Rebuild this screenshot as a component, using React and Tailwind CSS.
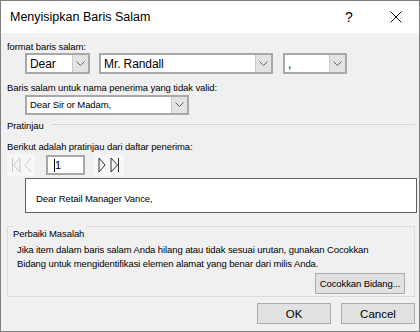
import React from "react";

const Chevron = () => (
  <svg width="9" height="6" viewBox="0 0 9 6" fill="none">
    <path d="M0.5 0.5 L4.5 4.5 L8.5 0.5" stroke="#606060" strokeWidth="1" />
  </svg>
);

const Combo = ({ w, text, textClass = "text-[12px]" }) => (
  <div
    className="flex h-full border-2 border-[#a8a8a8] bg-white"
    style={{ width: w }}
  >
    <div className={`flex-1 flex items-center pl-[3px] text-black whitespace-nowrap ${textClass}`}>{text}</div>
    <div className="w-[16px] bg-[#e3e3e3] border-l border-[#c8c8c8] flex items-center justify-center">
      <Chevron />
    </div>
  </div>
);

export default function App() {
  return (
    <div
      className="w-[420px] h-[332px] border border-[#7f7f7f] bg-[#f0f0f0] flex flex-col overflow-hidden"
      style={{ fontFamily: '"Liberation Sans", Arial, sans-serif' }}
    >
      {/* title bar */}
      <div className="h-[32px] bg-white flex items-center shrink-0">
        <div className="pl-[9px] text-[12.5px] text-black flex-1 whitespace-nowrap">
          Menyisipkan Baris Salam
        </div>
        <div className="w-[12px] text-[14px] text-black mr-[34px] text-center">?</div>
        <div className="w-[14px] mr-[16px] flex items-center justify-center">
          <svg width="12" height="12" viewBox="0 0 12 12">
            <path d="M0.5 0.5 L11.5 11.5 M11.5 0.5 L0.5 11.5" stroke="#111" strokeWidth="1" />
          </svg>
        </div>
      </div>

      <div className="flex flex-col text-[9.5px] tracking-[-0.1px] text-black leading-[12px] whitespace-nowrap">
        <div className="mt-[8px] ml-[6px] h-[12px]">format baris salam:</div>
        <div className="h-[21px] flex ml-[24px]">
          <Combo w={65} text="Dear" />
          <div className="ml-[9px]"><Combo w={174} text="Mr. Randall" /></div>
          <div className="ml-[10px]"><Combo w={64} text="," /></div>
        </div>

        <div className="mt-[8px] ml-[6px] h-[12px]">Baris salam untuk nama penerima yang tidak valid:</div>
        <div className="mt-[1px] h-[20px] ml-[24px] flex">
          <Combo w={164} text="Dear Sir or Madam," textClass="text-[9.5px]" />
        </div>

        <div className="mt-[5px] h-[12px] ml-[6px] flex items-start">
          <span>Pratinjau</span>
          <div className="flex-1 mt-[4px] ml-[8px] mr-[4px] h-px bg-[#d5d5d5]" />
        </div>

        <div className="mt-[9px] ml-[6px] h-[12px]">Berikut adalah pratinjau dari daftar penerima:</div>

        <div className="mt-[1px] h-[22px] ml-[6px] flex items-center">
          <div className="w-[28px] h-[22px] bg-[#f7f7f7] flex items-center justify-around px-[2px]">
            <svg width="10" height="16" viewBox="0 0 10 16" fill="none">
              <path d="M1.5 1 V15 M9 1 L2.5 8 L9 15 Z" stroke="#c8c8c8" strokeWidth="1" />
            </svg>
            <svg width="8" height="16" viewBox="0 0 8 16" fill="none">
              <path d="M7 1 L1 8 L7 15" stroke="#c8c8c8" strokeWidth="1" />
            </svg>
          </div>
          <div className="ml-[11px] w-[39px] h-[20px] border-2 border-[#a8a8a8] bg-white flex items-center pl-[6px] text-[11px]">
            <span className="inline-block w-px h-[13px] bg-black" />
            <span>1</span>
          </div>
          <div className="ml-[9px] w-[30px] h-[22px] bg-[#f7f7f7] flex items-center justify-around px-[2px]">
            <svg width="8" height="16" viewBox="0 0 8 16" fill="none">
              <path d="M1 1 L7 8 L1 15 Z" stroke="#333" strokeWidth="1" />
            </svg>
            <svg width="10" height="16" viewBox="0 0 10 16" fill="none">
              <path d="M1 1 L7.5 8 L1 15 Z M8.5 1 V15" stroke="#333" strokeWidth="1" />
            </svg>
          </div>
        </div>

        <div className="mt-[2px] h-[35px] ml-[24px] mr-[2px] border border-[#606060] bg-white flex items-center pl-[10px] pt-[7px]">
          Dear Retail Manager Vance,
        </div>

        <div className="relative mt-[13px] h-[71px] ml-[6px] mr-[4px] border border-[#dcdcdc] flex flex-col">
          <div className="absolute -top-[1px] left-[5px] bg-[#f0f0f0] pr-[2px] pt-[2px] pb-[1px]">Perbaiki Masalah</div>
          <div className="mt-[16px] ml-[9px] leading-[14px]">
            Jika item dalam baris salam Anda hilang atau tidak sesuai urutan, gunakan Cocokkan
            <br />
            Bidang untuk mengidentifikasi elemen alamat yang benar dari milis Anda.
          </div>
          <div className="flex justify-end mr-[9px] mt-[2px]">
            <div className="w-[90px] h-[21px] bg-[#e1e1e1] border border-[#adadad] flex items-center justify-center">
              Cocokkan Bidang...
            </div>
          </div>
        </div>

        <div className="mt-[6px] h-[21px] flex justify-end mr-[4px] gap-[10px]">
          <div className="w-[74px] h-[21px] bg-[#e1e1e1] border border-[#adadad] flex items-center justify-center text-[11.5px] tracking-normal">OK</div>
          <div className="w-[74px] h-[21px] bg-[#e1e1e1] border border-[#adadad] flex items-center justify-center text-[11.5px] tracking-normal">Cancel</div>
        </div>
      </div>
    </div>
  );
}
